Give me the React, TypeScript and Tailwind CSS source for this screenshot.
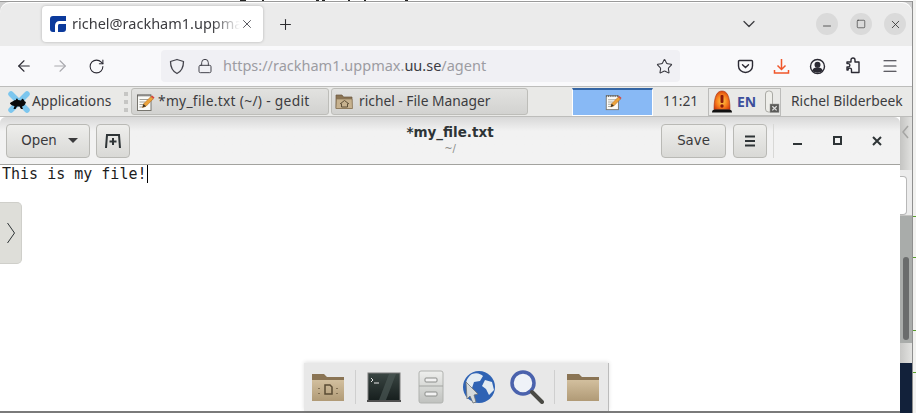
import { ArrowLeft, ArrowRight, ChevronDown, Lock, Menu, Minus, Plus, RotateCw, Square, Star, X } from "lucide-react";

const ui = "font-['Noto_Sans',sans-serif]";
const gtk = "font-['DejaVu_Sans',sans-serif]";

function GeditIcon({ size = 20 }: { size?: number }) {
  return (
    <svg width={size} height={size} viewBox="0 0 20 20" className="shrink-0">
      <rect x="2.5" y="3" width="13.5" height="15.5" fill="#fbfbf8" stroke="#77756e" />
      <path d="M3 2.5v2M5 2.5v2M7 2.5v2M9 2.5v2M11 2.5v2M13 2.5v2M15 2.5v2" stroke="#555" strokeWidth="0.9" />
      <path d="M4.5 7.5h9M4.5 10h6M4.5 12.5h4.5M4.5 15h3" stroke="#a3a199" />
      <path d="M7.5 15.5 8.5 12 16 4.5l2.4 2.2-7.4 7.6z" fill="#eda33a" stroke="#b0691a" strokeWidth="0.6" />
      <path d="M16 4.5l1.1-1.1 2.4 2.2-1.1 1.1z" fill="#d8413a" />
      <path d="M7.5 15.5 8.5 12l2.5 2.3z" fill="#3a3226" />
    </svg>
  );
}

function FolderHomeIcon() {
  return (
    <svg width="19" height="19" viewBox="0 0 19 19" className="shrink-0">
      <path d="M1 3h6l1.500 2H17v11.500H1z" fill="#8b7453" stroke="#6a583f" strokeWidth="0.7" />
      <path d="M1.500 7h15.500l.5 9.500H1z" fill="#c7b28f" stroke="#8a7556" strokeWidth="0.7" />
      <path d="M5 12 9.500 8.500 14 12M6.500 11.500v3.500h6v-3.500" fill="none" stroke="#5f5038" />
    </svg>
  );
}

function MouseLogo() {
  return (
    <svg width="24" height="22" viewBox="0 0 24 22" className="shrink-0">
      <path d="M4 3 20 19M20 3 4 19" stroke="#7cc6ee" strokeWidth="5.500" strokeLinecap="round" />
      <path d="M3 12c2-1 4-3 6-3 0-1 1-2 1.500-1l.5 1 3 .5c1-2 2-2 2.500-1 1 1 .5 2 2.500 2.500-1 3-2 4-4 4.500l1 2.500h-2l-1.500-2.500H10l-1.500 2.500h-2l1-3c-2 0-3.500-1-4.500-2.500z" fill="#0a0a0a" />
    </svg>
  );
}

function AlarmIcon() {
  return (
    <svg width="22" height="23" viewBox="0 0 22 23" className="shrink-0">
      <defs>
        <radialGradient id="alarm" cx="0.5" cy="0.55" r="0.6">
          <stop offset="0" stopColor="#ffd04a" />
          <stop offset="0.55" stopColor="#f8801f" />
          <stop offset="1" stopColor="#d43a0a" />
        </radialGradient>
      </defs>
      <path d="M3 19.500C3 6 6 1 11 1s8 5 8 18.500z" fill="url(#alarm)" stroke="#a3300d" strokeWidth="0.6" />
      <rect x="9.500" y="5" width="3" height="8" rx="1" fill="#8c1a0a" />
      <circle cx="11" cy="16" r="1.700" fill="#8c1a0a" />
      <path d="M1 22.500c0-2 1-3 3-3h14c2 0 3 1 3 3z" fill="#111" />
    </svg>
  );
}

function BatteryIcon() {
  return (
    <svg width="16" height="24" viewBox="0 0 16 24" className="ml-[8px] shrink-0">
      <rect x="1.500" y="1" width="7" height="21" rx="3" fill="#eeeeea" stroke="#a9a9a4" />
      <rect x="6" y="14" width="9" height="8.500" fill="#5a5a58" stroke="#9a9a98" strokeWidth="0.5" />
      <path d="m8.300 16.200 4.400 4.200m0-4.200-4.400 4.200" stroke="#ddd" strokeWidth="1.300" />
    </svg>
  );
}

function BrowserStrip() {
  return (
    <div className="flex h-[46px] shrink-0 flex-col">
      {/* the window behind shows a sliver of text above the browser */}
      <svg width="913" height="1" viewBox="0 0 913 1" className="block shrink-0 bg-white">
        <path d="M240 .5h6M262 .5h2M316 .5h3M322 .5h3M348 .5h2M364 .5h2M405 .5h3" stroke="#222" />
      </svg>
      <div className="h-px bg-[#9a9a9a]" />
      <div className="flex flex-1 items-center rounded-t-[10px] bg-[#ebebeb] pl-[42px] pr-[6px] shadow-[inset_0_1px_0_#fff]">
        <div className="flex h-[36px] w-[221px] items-center rounded-[4px] bg-white pl-[8px] pr-[8px] shadow-[0_0_3px_rgba(0,0,0,0.25)]">
          <svg width="16" height="16" viewBox="0 0 16 16" className="shrink-0">
            <path d="M3 0h13v5H9.500C7 5 5 7 5 9.500V16H3a3 3 0 0 1-3-3V3a3 3 0 0 1 3-3z" fill="#0b3a9c" />
            <path d="M9.500 8H16v5a3 3 0 0 1-3 3H8V9.500C8 8.700 8.700 8 9.500 8z" fill="#0b3a9c" />
          </svg>
          <span className={`${ui} ml-[6px] w-[168px] whitespace-nowrap text-[14.500px] text-[#3c3c40] [mask-image:linear-gradient(to_left,transparent,black_28px)]`}>
            richel@rackham1.uppmax
          </span>
          <X size={14} strokeWidth={1.500} className="shrink-0 text-[#44444a]" />
        </div>
        <Plus size={17} strokeWidth={1.500} className="ml-[14px] text-[#2c2c30]" />
        <ChevronDown size={20} strokeWidth={1.500} className="ml-auto mr-[57px] text-[#3c3c40]" />
        <div className="flex gap-[12px]">
          <div className="flex size-[22px] items-center justify-center rounded-full bg-[#dadada]">
            <Minus size={12} strokeWidth={1.500} className="mt-[4px] text-[#2e2e2e]" />
          </div>
          <div className="flex size-[22px] items-center justify-center rounded-full bg-[#dadada]">
            <Square size={10} strokeWidth={1.500} className="text-[#2e2e2e]" />
          </div>
          <div className="flex size-[22px] items-center justify-center rounded-full bg-[#dadada]">
            <X size={13} strokeWidth={1.500} className="text-[#2e2e2e]" />
          </div>
        </div>
      </div>
    </div>
  );
}

function NavBar() {
  return (
    <div className="flex h-[40px] shrink-0 items-center bg-[#f9f9fb] pl-[15px]">
      <ArrowLeft size={18} strokeWidth={1.500} className="text-[#2b2a33]" />
      <ArrowRight size={18} strokeWidth={1.500} className="ml-[18px] text-[#a9a9ae]" />
      <RotateCw size={17} strokeWidth={1.500} className="ml-[19px] text-[#2b2a33]" />
      <div className="ml-[56px] flex h-[32px] w-[519px] items-center rounded-[4px] bg-[#f0f0f4] pl-[8px] pr-[7px]">
        <svg width="16" height="17" viewBox="0 0 16 17" fill="none" stroke="#44444c" strokeWidth="1.300" className="shrink-0">
          <path d="M8 1.500 14.500 3.500c0 6-1.500 9.500-6.500 12-5-2.500-6.500-6-6.500-12z" strokeLinejoin="round" />
        </svg>
        <Lock size={16} strokeWidth={1.500} className="ml-[12px] shrink-0 text-[#44444c]" />
        <span className={`${ui} ml-[10px] whitespace-nowrap text-[14.500px] text-[#9c9ca2]`}>
          https://rackham1.uppmax.<span className="text-[#3c3c42]">uu.se</span>/agent
        </span>
        <Star size={17} strokeWidth={1.500} className="ml-auto text-[#35353c]" />
      </div>
      <div className="ml-[57px] flex items-center gap-[19px] text-[#2b2a33]">
        <svg width="17" height="17" viewBox="0 0 17 17" fill="none" stroke="currentColor" strokeWidth="1.400">
          <path d="M2.500 2.500h12c.6 0 1 .4 1 1v4.500c0 3.500-3 6.500-7 6.500s-7-3-7-6.500V3.500c0-.6.4-1 1-1z" />
          <path d="m5.500 6.800 3 2.800 3-2.800" strokeLinecap="round" />
        </svg>
        <svg width="17" height="17" viewBox="0 0 17 17" fill="none" stroke="#f0562a" strokeWidth="1.500">
          <path d="M8.500 1v10M4.500 7.500l4 4 4-4M1.500 12v3h14v-3" />
        </svg>
        <svg width="17" height="17" viewBox="0 0 17 17" fill="none" stroke="currentColor" strokeWidth="1.400">
          <circle cx="8.500" cy="8.500" r="7" />
          <circle cx="8.500" cy="6.800" r="2.300" fill="currentColor" />
          <path d="M4 12.500c1-2 2.500-2.500 4.500-2.500s3.500.5 4.500 2.500c-1.200 1-2.800 1.500-4.500 1.500S5.200 13.500 4 12.500z" fill="currentColor" />
        </svg>
        <svg width="17" height="18" viewBox="0 0 17 18" fill="none" stroke="currentColor" strokeWidth="1.400">
          <path d="M2 5h4V3a2 2 0 0 1 4 0v2h4v10.500H6.500v-2.700a1.700 1.700 0 0 0-3.400 0v.2H2v-3h1.200a1.700 1.700 0 0 0 0-3.400H2z" strokeLinejoin="round" />
        </svg>
        <Menu size={18} strokeWidth={1.500} />
      </div>
    </div>
  );
}

function TaskButton({ width, children }: { width: string; children: React.ReactNode }) {
  return (
    <div className={`${width} flex h-[27px] items-center gap-[3px] rounded-[3px] border border-[#bdbdb9] bg-gradient-to-b from-[#e2e2e0] to-[#d2d2d0] pl-[3px]`}>
      {children}
    </div>
  );
}

function XfcePanel() {
  return (
    <div className={`${ui} flex h-[31px] shrink-0 items-center border-y border-y-[#bdbdbb] bg-[#e9e9e7] pl-[7px] text-[13.800px] text-[#3c3c40]`}>
      <MouseLogo />
      <span className="ml-[1px] w-[81px]">Applications</span>
      <div className="ml-[11px] flex h-[20px] w-[4px] flex-col justify-between">
        <div className="h-[4px] bg-[#c6c6c4]" />
        <div className="h-[4px] bg-[#c6c6c4]" />
        <div className="h-[4px] bg-[#c6c6c4]" />
      </div>
      <div className="ml-[3px] flex gap-[2px]">
        <TaskButton width="w-[198px]">
          <GeditIcon />
          <span className="tracking-[0.3px]">*my_file.txt (~/) - gedit</span>
        </TaskButton>
        <TaskButton width="w-[197px]">
          <FolderHomeIcon />
          <span className="ml-[2px]">richel - File Manager</span>
        </TaskButton>
      </div>
      <div className="ml-[44px] flex h-[28px] w-[81px] items-center justify-center border-t-2 border-x border-b border-t-[#3465a4] border-x-white border-b-white bg-[#88b9f5]">
        <GeditIcon size={18} />
      </div>
      <span className="ml-[10px] w-[35px]">11:21</span>
      <div className="ml-[10px] flex h-[28px] w-[73px] items-center overflow-hidden border border-[#bcbcba] pl-[2px]">
        <AlarmIcon />
        <span className="ml-[4px] text-[14px] font-bold text-[#3c4f9c]">EN</span>
        <BatteryIcon />
      </div>
      <span className="ml-[10px] whitespace-nowrap">Richel Bilderbeek</span>
    </div>
  );
}

function GeditHeader() {
  const button = "flex h-[34px] items-center justify-center rounded-[4px] border border-[#b9b9b5] bg-gradient-to-b from-[#eeeeec] to-[#d9d9d6] text-[#3a3a3c]";
  return (
    <div className={`${gtk} relative flex h-[48px] shrink-0 items-center rounded-t-[6px] border-b border-b-[#a3a39f] bg-[#f2f2f2] bg-gradient-to-b from-[#d8d8d8] via-[#f2f2f2] via-30% to-[#f2f2f2] pl-[6px] text-[13.300px]`}>
      <div className={`${button} w-[84px] gap-[11px] pl-[3px]`}>
        <span>Open</span>
        <svg width="10" height="5" viewBox="0 0 10 5">
          <path d="M0 0h10L5 5z" fill="#3a3a3c" />
        </svg>
      </div>
      <div className={`${button} ml-[6px] w-[34px]`}>
        <svg width="16" height="14" viewBox="0 0 16 14" fill="none" stroke="#2e3436" strokeWidth="2">
          <path d="M1 14 2 1h12l1 13" />
          <path d="M8 4v7M4.500 7.500h7" />
        </svg>
      </div>
      {/* title stays centred on the window */}
      <div className="absolute left-0 right-0 top-[9px] text-center leading-none">
        <div className="text-[13.500px] font-bold text-[#2e3436]">*my_file.txt</div>
        <div className="mt-[4px] text-[10px] text-[#8a8c88]">~/</div>
      </div>
      <div className={`${button} ml-auto w-[65px]`}>Save</div>
      <div className={`${button} ml-[7px] w-[34px]`}>
        <svg width="12" height="12" viewBox="0 0 12 12" stroke="#2e3436" strokeWidth="2">
          <path d="M1 1.500h10M1 6h10M1 10.500h10" />
        </svg>
      </div>
      <div className="ml-[6px] h-[34px] w-px bg-[#d8d8d6]" />
      <div className="flex w-[126px] items-center text-[#2e3436]">
        <svg width="9" height="9" viewBox="0 0 9 9" className="ml-[19px]">
          <path d="M0 7h9v2H0z" fill="currentColor" />
        </svg>
        <svg width="9" height="9" viewBox="0 0 9 9" fill="none" stroke="currentColor" strokeWidth="2" className="ml-[31px]">
          <path d="M1 1h7v7H1z" />
        </svg>
        <svg width="10" height="10" viewBox="0 0 10 10" fill="none" stroke="currentColor" strokeWidth="2" className="ml-[30px]">
          <path d="m1 1 8 8M9 1 1 9" />
        </svg>
      </div>
    </div>
  );
}

function Dock() {
  return (
    <div className="absolute bottom-0 left-[304px] flex h-[48px] w-[305px] items-center border-r border-r-[#bbb] bg-[#e8e8e8] pl-[7px] shadow-[0_-1px_4px_rgba(0,0,0,0.12)] [&>svg]:blur-[0.4px]">
      <svg width="34" height="32" viewBox="0 0 34 32" className="shrink-0">
        <defs>
          <linearGradient id="folder" x1="0" x2="0" y1="0" y2="1">
            <stop offset="0" stopColor="#d2bf9e" />
            <stop offset="1" stopColor="#b09a76" />
          </linearGradient>
          <linearGradient id="screen" x1="0" x2="0" y1="0" y2="1">
            <stop offset="0" stopColor="#3a4643" />
            <stop offset="1" stopColor="#161e1d" />
          </linearGradient>
          <linearGradient id="cabinet" x1="0" x2="0" y1="0" y2="1">
            <stop offset="0" stopColor="#eeefed" />
            <stop offset="1" stopColor="#bfc1be" />
          </linearGradient>
        </defs>
        <path d="M1 3h12l3 3h17v24H1z" fill="#8a7454" />
        <path d="M1 9h32v21H1z" fill="url(#folder)" />
        <path d="M14 14h5l2 2v7h-7z" fill="none" stroke="#5a4b33" strokeWidth="1.500" />
        <path d="M8 17v1M8 22v1M26 17v1M26 22v1" stroke="#6d5c42" strokeWidth="1.500" />
      </svg>
      <div className="ml-[10px] h-[34px] w-px bg-[#cfcfcf]" />
      <svg width="34" height="32" viewBox="0 0 34 32" className="ml-[11px] shrink-0">
        <rect x="1" y="2" width="32" height="28" fill="url(#screen)" stroke="#7a7a7a" />
        <path d="M22 3 12 29h7L29 3z" fill="#4a5754" opacity="0.7" />
        <path d="M4 7l2 2-2 2M7 12h5" stroke="#e8e8e8" fill="none" />
        <rect x="0" y="29" width="34" height="2" fill="#4f4f4f" />
      </svg>
      <svg width="26" height="34" viewBox="0 0 26 34" className="ml-[17px] shrink-0">
        <rect x="1" y="1" width="24" height="32" rx="2" fill="url(#cabinet)" stroke="#b0b2af" />
        <path d="M1 16h24" stroke="#a2a4a1" />
        <rect x="7" y="8" width="12" height="4" rx="1" fill="#f2f2f2" stroke="#8a8c89" />
        <rect x="7" y="22" width="12" height="4" rx="1" fill="#f2f2f2" stroke="#8a8c89" />
      </svg>
      <svg width="34" height="34" viewBox="0 0 34 34" className="ml-[18px] shrink-0">
        <circle cx="17" cy="17" r="16" fill="#2f63b4" />
        <path d="M10 4c5-2 9 0 11 2l-3 5-6 1-2 6-6-4c0-4 3-8 6-10zM23 10l7 2 2 8-5 5-3-6-4-3z" fill="#e4ecf2" />
        <path d="M4 12 16 24l-4 1 2 7-3 1-3-7-3 3z" fill="#d6dadb" stroke="#6b7175" strokeWidth="0.8" />
      </svg>
      <svg width="36" height="36" viewBox="0 0 36 36" fill="none" className="ml-[13px] shrink-0">
        <circle cx="14" cy="14" r="11" fill="#eef2f8" stroke="#4a62ad" strokeWidth="3.500" />
        <path d="m23 23 10 10" stroke="#4a4a44" strokeWidth="4" strokeLinecap="round" />
      </svg>
      <div className="ml-[9px] h-[34px] w-px bg-[#cfcfcf]" />
      <svg width="34" height="32" viewBox="0 0 34 32" className="ml-[11px] shrink-0">
        <path d="M1 3h12l3 3h17v24H1z" fill="#8a7454" />
        <path d="M1 9h32v21H1z" fill="url(#folder)" />
      </svg>
    </div>
  );
}

function Gedit() {
  return (
    <div className="relative flex min-w-0 flex-1 flex-col border-b-2 border-b-[#7a7a7a] bg-white">
      <GeditHeader />
      <div className="flex-1 pl-[2px] font-['DejaVu_Sans_Mono',monospace] text-[15px] leading-[18px] text-[#1c1c1c]">
        This is my file!<span className="inline-block h-[18px] w-px bg-black align-top" />
      </div>
      <div className="absolute left-0 top-[85px] flex h-[62px] w-[22px] items-center rounded-r-[5px] border border-l-0 border-[#cfcfca] bg-[#deded9] pl-[6px]">
        <svg width="10" height="22" viewBox="0 0 10 22" fill="none" stroke="#2e3436">
          <path d="m1.500 1 7 10-7 10" />
        </svg>
      </div>
      <Dock />
    </div>
  );
}

// bits of other windows peeking out to the right of gedit
function RightEdge() {
  return (
    <div className="flex w-[12px] shrink-0 flex-col">
      <div className="h-[53px] bg-gradient-to-r from-[#c4c4c2] to-[#e2e2e0] pl-[2px] pt-[8px]">
        <svg width="7" height="14" viewBox="0 0 7 14" fill="none" stroke="#a5a5a3" strokeWidth="1.500">
          <path d="M6 1 1 7l5 6" />
        </svg>
      </div>
      <div className="h-[46px] border-b border-b-[#c4c4c2] bg-[#ececec]">
        <div className="mt-[6px] h-[39px] w-[7px] rounded-r-[4px] border border-l-0 border-[#b8b8b8] bg-white" />
      </div>
      <div className="h-[127px] bg-[#a9acaa] pl-[3px] pt-[41px]">
        <div className="h-[83px] w-[6px] rounded-full bg-[#6a6c6c]" />
      </div>
      <div className="h-[20px] bg-gradient-to-r from-[#c8c8c6] to-[#e2e2e0]" />
      <div className="flex-1 bg-[#12213a]" />
    </div>
  );
}

// the desktop behind, with the green ticks of a chart
function FarEdge() {
  return (
    <div className="flex w-[3px] shrink-0 flex-col bg-[#f2f2f0]">
      <div className="h-[216px]" />
      <div className="h-px bg-[#5aa02c]" />
      <div className="mt-[40px] h-px bg-[#5aa02c]" />
      <div className="mt-[72px] h-px bg-[#5aa02c]" />
      <div className="mt-[41px] h-px bg-[#5aa02c]" />
    </div>
  );
}

export default function App() {
  return (
    <div className="flex h-[413px] w-[916px] overflow-hidden bg-[#d0d0d0]">
      <div className="flex w-[913px] shrink-0 flex-col border-r border-r-[#8f8f8f]">
        <BrowserStrip />
        <NavBar />
        <XfcePanel />
        <div className="flex min-h-0 flex-1">
          <Gedit />
          <RightEdge />
        </div>
      </div>
      <FarEdge />
    </div>
  );
}
